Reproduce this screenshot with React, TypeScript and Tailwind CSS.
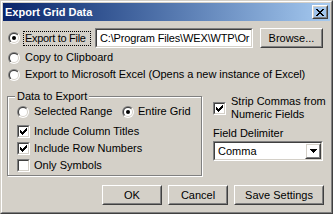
import React from 'react';

const Radio: React.FC<{ checked?: boolean }> = ({ checked }) => (
  <svg width="12" height="12" viewBox="0 0 12 12" className="shrink-0">
    <defs>
      <linearGradient id="rOuter" x1="0" y1="0" x2="1" y2="1">
        <stop offset="0.5" stopColor="#808080" />
        <stop offset="0.5" stopColor="#ffffff" />
      </linearGradient>
      <linearGradient id="rInner" x1="0" y1="0" x2="1" y2="1">
        <stop offset="0.5" stopColor="#404040" />
        <stop offset="0.5" stopColor="#d4d0c8" />
      </linearGradient>
    </defs>
    <circle cx="6" cy="6" r="6" fill="url(#rOuter)" />
    <circle cx="6" cy="6" r="5" fill="url(#rInner)" />
    <circle cx="6" cy="6" r="4" fill="#ffffff" />
    {checked && <circle cx="6" cy="6" r="2" fill="#000000" />}
  </svg>
);

const Check: React.FC<{ checked?: boolean }> = ({ checked }) => (
  <span className="shrink-0 w-[13px] h-[13px] border border-[#808080] border-r-white border-b-white">
    <span className="block w-[11px] h-[11px] border border-[#404040] border-r-[#d4d0c8] border-b-[#d4d0c8] bg-white">
      {checked && (
        <svg width="9" height="9" viewBox="0 0 9 9" shapeRendering="crispEdges">
          <path d="M1 3h1v3h-1zM2 4h1v3h-1zM3 5h1v3h-1zM4 4h1v3h-1zM5 3h1v3h-1zM6 2h1v3h-1zM7 1h1v3h-1z" fill="#000" />
        </svg>
      )}
    </span>
  </span>
);

const Button: React.FC<{ className?: string; children: React.ReactNode }> = ({ className, children }) => (
  <div className={`border border-white border-r-[#404040] border-b-[#404040] ${className ?? ''}`}>
    <div className="h-full border border-[#d4d0c8] border-r-[#808080] border-b-[#808080] flex items-center justify-center">
      {children}
    </div>
  </div>
);

const Sunken: React.FC<{ className?: string; children: React.ReactNode }> = ({ className, children }) => (
  <div className={`border border-[#808080] border-r-white border-b-white ${className ?? ''}`}>
    <div className="h-full border border-[#404040] border-r-[#d4d0c8] border-b-[#d4d0c8] bg-white flex items-center overflow-hidden">
      {children}
    </div>
  </div>
);

const App: React.FC = () => {
  return (
    <div className="w-[333px] h-[214px] bg-[#d4d0c8] font-['Liberation_Sans',Tahoma,sans-serif] text-[11px] text-black leading-[13px] select-none">
      <div className="w-full h-full border border-[#d4d0c8] border-r-[#404040] border-b-[#404040]">
        <div className="w-full h-full border border-white border-r-[#808080] border-b-[#808080] p-px flex flex-col">
          {/* title bar */}
          <div className="h-[18px] shrink-0 bg-linear-to-r from-[#0a246a] to-[#a6caf0] flex items-center pl-[2px] pr-[2px]">
            <span className="text-white font-bold text-[11px] flex-1">Export Grid Data</span>
            <Button className="w-[16px] h-[14px]">
              <svg width="8" height="7" viewBox="0 0 8 7" shapeRendering="crispEdges">
                <path d="M0 0h2v1h-2zM6 0h2v1h-2zM1 1h2v1h-2zM5 1h2v1h-2zM2 2h4v1h-4zM3 3h2v1h-2zM2 4h4v1h-4zM1 5h2v1h-2zM5 5h2v1h-2zM0 6h2v1h-2zM6 6h2v1h-2z" fill="#000" />
              </svg>
            </Button>
          </div>

          {/* body */}
          <div className="flex-1 flex flex-col pl-[5px] pr-[5px]">
            <div className="mt-[7px] h-[20px] flex items-center">
              <Radio checked />
              <span className="ml-[3px] w-[68px] h-[15px] border border-dotted border-black flex items-center pl-px whitespace-nowrap tracking-[-0.3px]">Export to File</span>
              <Sunken className="ml-[4px] w-[158px] h-[20px]">
                <span className="pl-[3px] whitespace-nowrap tracking-[-0.15px]">C:\Program Files\WEX\WTP\Or</span>
              </Sunken>
              <Button className="ml-[7px] w-[63px] h-[20px]">Browse...</Button>
            </div>
            <div className="mt-px h-[17px] flex items-center">
              <Radio />
              <span className="ml-[5px]">Copy to Clipboard</span>
            </div>
            <div className="h-[17px] flex items-center">
              <Radio />
              <span className="ml-[5px] whitespace-nowrap tracking-[-0.05px]">Export to Microsoft Excel (Opens a new instance of Excel)</span>
            </div>

            <div className="mt-[13px] flex">
              {/* group box */}
              <div className="relative shrink-0 w-[195px] h-[80px] border border-[#808080] shadow-[inset_1px_1px_0_#fff,1px_1px_0_#fff] -ml-px">
                <span className="absolute -top-[7px] left-[7px] bg-[#d4d0c8] px-[2px]">Data to Export</span>
                <div className="flex flex-col pl-[9px] pt-[6px]">
                  <div className="h-[17px] flex items-center">
                    <Radio />
                    <span className="ml-[5px] w-[88px]">Selected Range</span>
                    <Radio checked />
                    <span className="ml-[4px]">Entire Grid</span>
                  </div>
                  <div className="mt-[3px] h-[17px] flex items-center">
                    <Check checked />
                    <span className="ml-[4px]">Include Column Titles</span>
                  </div>
                  <div className="h-[17px] flex items-center">
                    <Check checked />
                    <span className="ml-[4px]">Include Row Numbers</span>
                  </div>
                  <div className="h-[17px] flex items-center">
                    <Check />
                    <span className="ml-[4px]">Only Symbols</span>
                  </div>
                </div>
              </div>

              {/* right column */}
              <div className="ml-[11px] flex flex-col w-[110px]">
                <div className="mt-[-1px] flex items-center">
                  <Check checked />
                  <span className="ml-[5px] whitespace-nowrap">Strip Commas from<br />Numeric Fields</span>
                </div>
                <span className="mt-[6px]">Field Delimiter</span>
                <Sunken className="mt-[1px] w-[110px] h-[20px]">
                  <span className="pl-[3px] flex-1">Comma</span>
                  <Button className="w-[16px] h-[16px]">
                    <svg width="7" height="4" viewBox="0 0 7 4" shapeRendering="crispEdges">
                      <path d="M0 0h7v1h-7zM1 1h5v1h-5zM2 2h3v1h-3zM3 3h1v1h-1z" fill="#000" />
                    </svg>
                  </Button>
                </Sunken>
              </div>
            </div>

            <div className="mt-[9px] flex justify-end gap-[6px] pr-px">
              <Button className="w-[60px] h-[20px]">OK</Button>
              <Button className="w-[60px] h-[20px]">Cancel</Button>
              <Button className="w-[90px] h-[20px]">Save Settings</Button>
            </div>
          </div>
        </div>
      </div>
    </div>
  );
};

export default App;
